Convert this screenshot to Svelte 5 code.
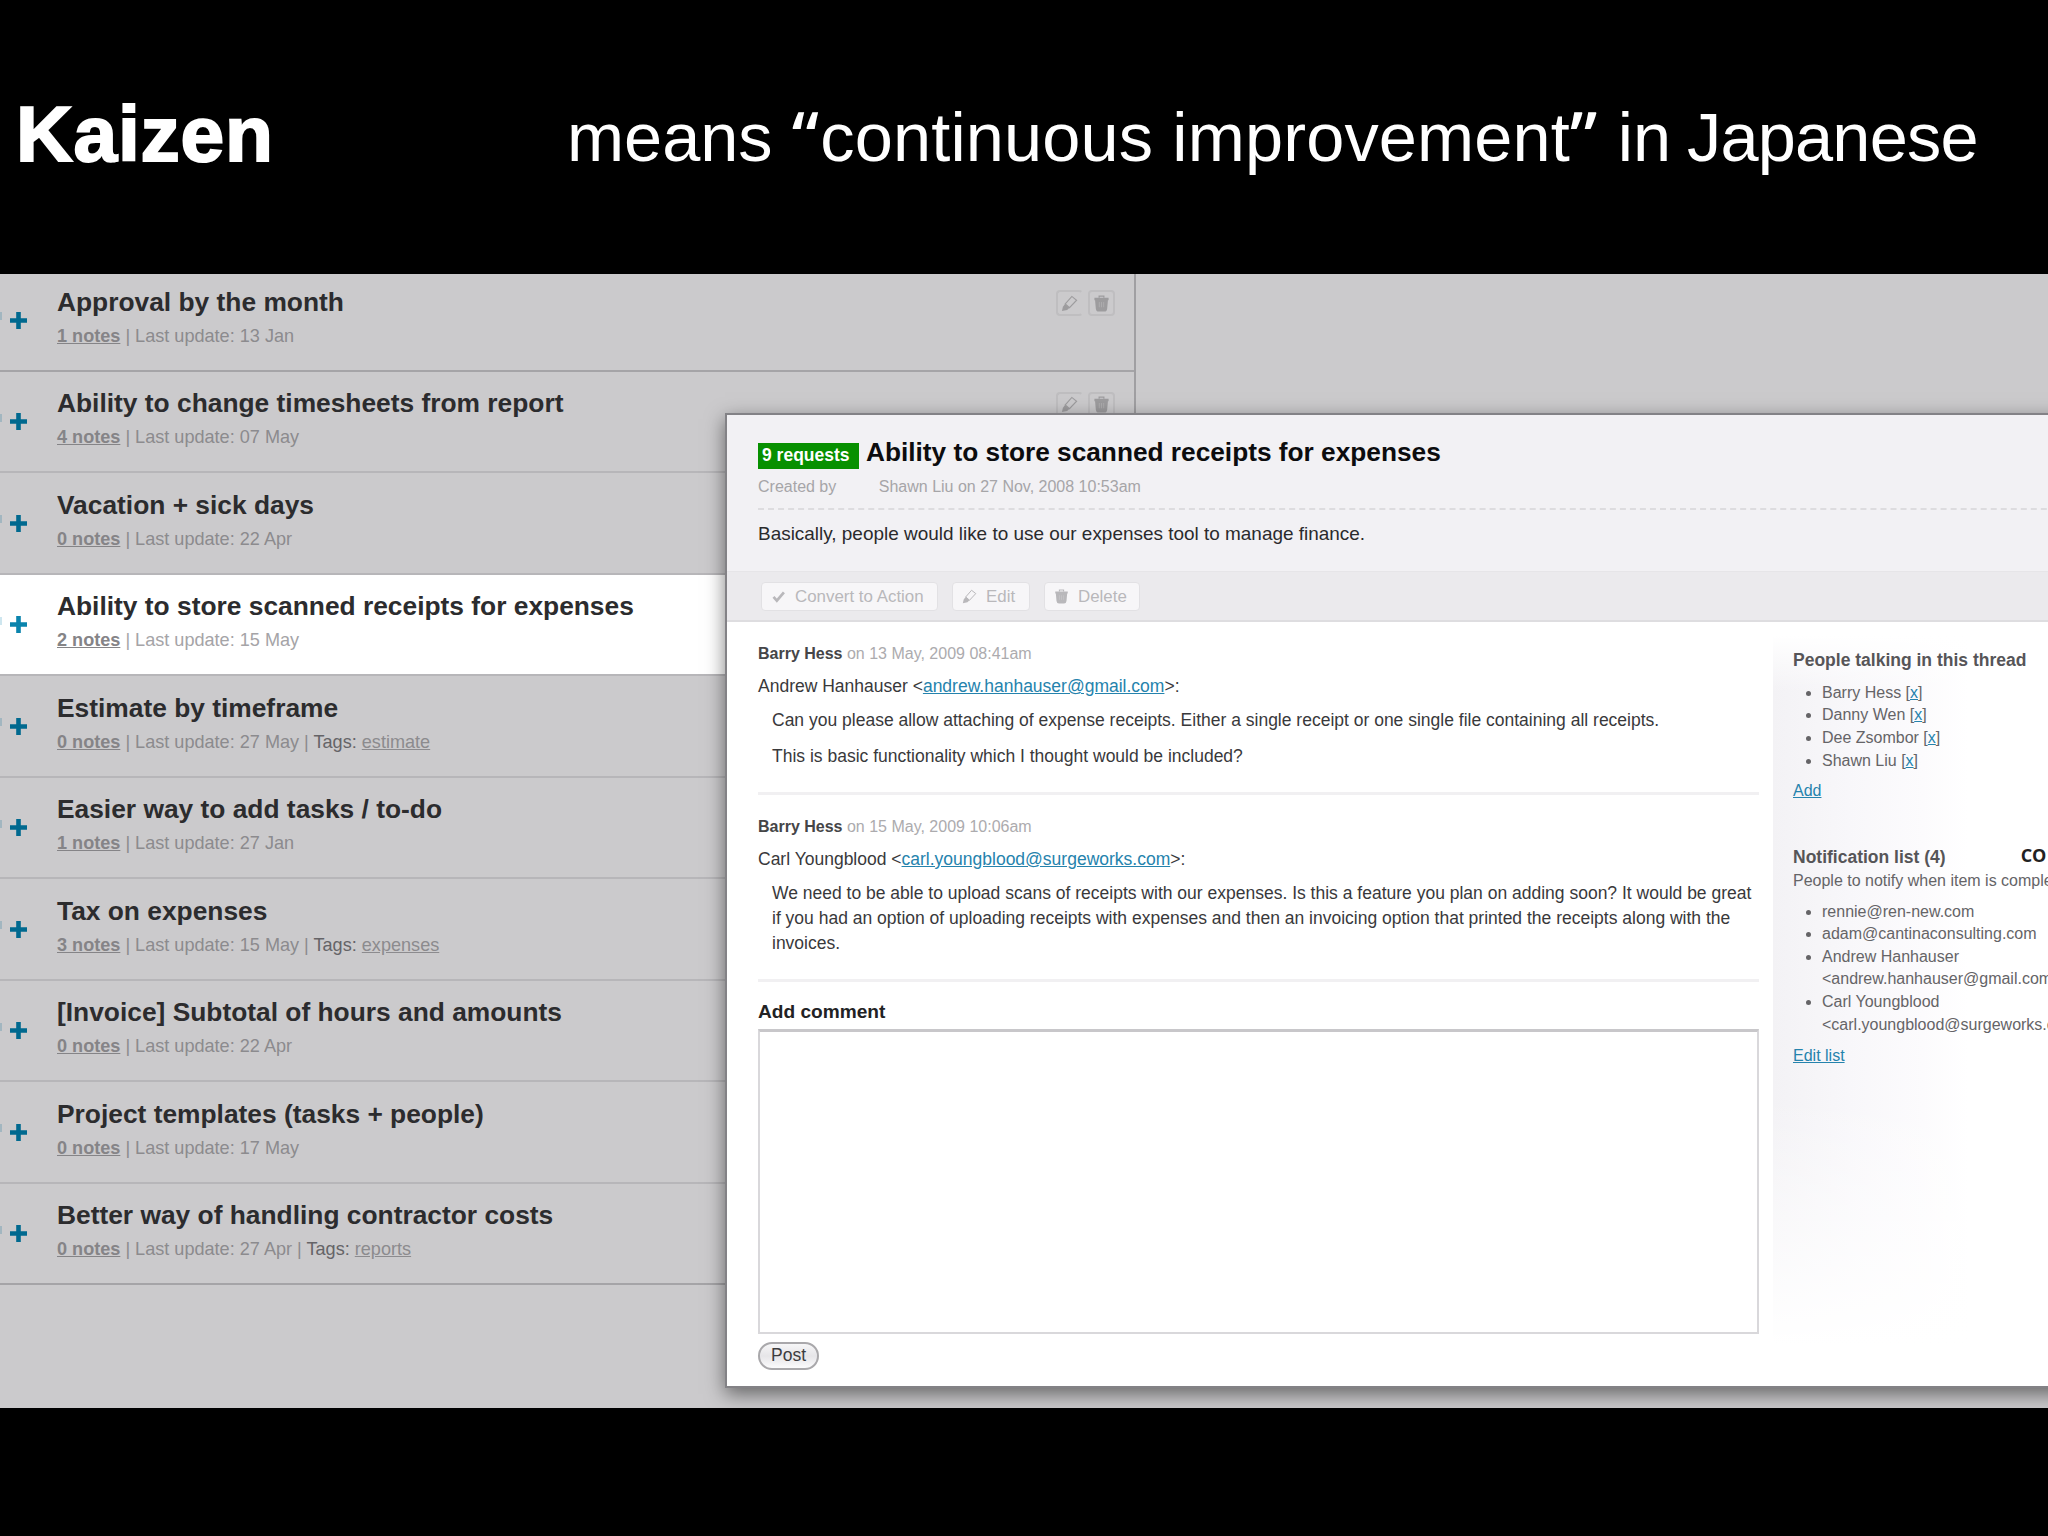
<script lang="ts">
  type Item = {
    title: string;
    notes: number;
    updated: string;
    tag?: string;
    active?: boolean;
  };

  const items: Item[] = [
    { title: 'Approval by the month', notes: 1, updated: '13 Jan' },
    { title: 'Ability to change timesheets from report', notes: 4, updated: '07 May' },
    { title: 'Vacation + sick days', notes: 0, updated: '22 Apr' },
    { title: 'Ability to store scanned receipts for expenses', notes: 2, updated: '15 May', active: true },
    { title: 'Estimate by timeframe', notes: 0, updated: '27 May', tag: 'estimate' },
    { title: 'Easier way to add tasks / to-do', notes: 1, updated: '27 Jan' },
    { title: 'Tax on expenses', notes: 3, updated: '15 May', tag: 'expenses' },
    { title: '[Invoice] Subtotal of hours and amounts', notes: 0, updated: '22 Apr' },
    { title: 'Project templates (tasks + people)', notes: 0, updated: '17 May' },
    { title: 'Better way of handling contractor costs', notes: 0, updated: '27 Apr', tag: 'reports' }
  ];

  const comments = [
    {
      author: 'Barry Hess',
      date: '13 May, 2009 08:41am',
      from: 'Andrew Hanhauser',
      email: 'andrew.hanhauser@gmail.com',
      lines: [
        'Can you please allow attaching of expense receipts. Either a single receipt or one single file containing all receipts.',
        'This is basic functionality which I thought would be included?'
      ]
    },
    {
      author: 'Barry Hess',
      date: '15 May, 2009 10:06am',
      from: 'Carl Youngblood',
      email: 'carl.youngblood@surgeworks.com',
      lines: [
        'We need to be able to upload scans of receipts with our expenses. Is this a feature you plan on adding soon? It would be great if you had an option of uploading receipts with expenses and then an invoicing option that printed the receipts along with the invoices.'
      ]
    }
  ];

  const people = ['Barry Hess', 'Danny Wen', 'Dee Zsombor', 'Shawn Liu'];

  const notified = [
    { name: 'rennie@ren-new.com' },
    { name: 'adam@cantinaconsulting.com' },
    { name: 'Andrew Hanhauser', email: '<andrew.hanhauser@gmail.com>' },
    { name: 'Carl Youngblood', email: '<carl.youngblood@surgeworks.com>' }
  ];
</script>

{#snippet pencil()}
  <svg class="icon" viewBox="0 0 18 18">
    <path d="M4.5 9.5 L11.5 1.5 L16.5 5.5 L9 13.5 Z" fill="none" stroke="currentColor" stroke-width="1.2" />
    <path d="M4.3 9.5 L9 13.6 L6.5 16 L1 17 L2 12.5 Z" fill="currentColor" />
  </svg>
{/snippet}

{#snippet trash()}
  <svg class="icon" viewBox="0 0 18 18">
    <path d="M6.5 3 V1.2 H11.5 V3" fill="none" stroke="currentColor" stroke-width="1.3" />
    <path d="M1.5 3 H16.5 V5.5 H15.8 L15 14.5 Q14.6 17.5 12 17.5 H6 Q3.4 17.5 3 14.5 L2.2 5.5 H1.5 Z" fill="currentColor" />
    <path d="M6.7 7.5 V13 M9 7.5 V13 M11.3 7.5 V13" stroke="#fff" stroke-opacity="0.2" stroke-width="0.9" />
  </svg>
{/snippet}

<div class="slide">
  <header>
    <h1>Kaizen</h1>
    <p>means <span class="quote">“</span><span class="quoted">continuous improvement</span><span class="quote">”</span> in <span class="language">Japanese</span></p>
  </header>

  <div class="stage">
    <div class="list">
      {#each items as item}
        <div class="row" class:active={item.active}>
          <span class="edge"></span>
          <svg class="plus" viewBox="0 0 17 17">
            <path d="M8.5 0 V17 M0 8.5 H17" stroke="currentColor" stroke-width="4.6" />
          </svg>
          <div class="info">
            <h2>{item.title}</h2>
            <div class="meta">
              <b>{item.notes} notes</b> | Last update: {item.updated}{#if item.tag}{' '}| <span class="tags">Tags:</span> <u>{item.tag}</u>{/if}
            </div>
          </div>
          <div class="tools">
            <span class="tool open">{@render pencil()}</span>
            <span class="tool">{@render trash()}</span>
          </div>
        </div>
      {/each}
    </div>

    <div class="dialog">
      <div class="head">
        <div class="heading">
          <span class="badge">9 requests</span>
          <h3>Ability to store scanned receipts for expenses</h3>
        </div>
        <div class="created"><span>Created by</span><span>Shawn Liu on 27 Nov, 2008 10:53am</span></div>
        <p class="summary">Basically, people would like to use our expenses tool to manage finance.</p>
      </div>

      <div class="toolbar">
        <span class="btn convert">
          <svg class="icon" viewBox="0 0 18 18">
            <path d="M3 9.5 L7 14 L15.5 4" fill="none" stroke="currentColor" stroke-width="3.2" />
          </svg>
          Convert to Action
        </span>
        <span class="btn edit">{@render pencil()} Edit</span>
        <span class="btn delete">{@render trash()} Delete</span>
      </div>

      <div class="body">
        <div class="thread">
          {#each comments as comment}
            <div class="comment">
              <div class="by"><b>{comment.author}</b> on {comment.date}</div>
              <div class="from">{comment.from} &lt;<span class="link">{comment.email}</span>&gt;:</div>
              {#each comment.lines as line}
                <p>{line}</p>
              {/each}
            </div>
          {/each}
          <div class="label">Add comment</div>
          <div class="textarea"></div>
          <div class="post">Post</div>
        </div>

        <div class="side">
          <h4>People talking in this thread</h4>
          <ul>
            {#each people as person}
              <li>{person} [<span class="link">x</span>]</li>
            {/each}
          </ul>
          <div class="action"><span class="link">Add</span></div>
          <h4 class="second">Notification list (4) <span class="callout">CO</span></h4>
          <div class="hint">People to notify when item is completed</div>
          <ul>
            {#each notified as person}
              <li>{person.name}{#if person.email}<br />{person.email}{/if}</li>
            {/each}
          </ul>
          <div class="action last"><span class="link">Edit list</span></div>
        </div>
      </div>
    </div>
  </div>
</div>

<style>
  :global(body) {
    background: #000;
    overflow: hidden;
  }

  .slide {
    width: 2048px;
    height: 1536px;
    overflow: hidden;
    background: #000;
    font-family: "Liberation Sans", Arial, sans-serif;
  }

  h1, h2, h3, h4, p, ul {
    margin: 0;
    padding: 0;
  }

  header {
    display: flex;
    align-items: baseline;
    box-sizing: border-box;
    height: 274px;
    padding: 79px 0 0 16px;
    color: #fff;
    white-space: nowrap;
  }

  h1 {
    width: 551px;
    font-size: 78.5px;
    font-weight: 700;
    letter-spacing: 0.8px;
    line-height: 110px;
    -webkit-text-stroke: 2px #fff;
  }

  header p {
    font-size: 68.5px;
    line-height: 110px;
  }

  .quote {
    margin-right: 1.5px;
    font-family: "Open Sans", sans-serif;
    font-weight: 600;
    line-height: 1;
  }

  .quoted {
    letter-spacing: 0.15px;
  }

  .language {
    margin-left: -3px;
    letter-spacing: -0.8px;
  }

  .stage {
    position: relative;
    height: 1134px;
    overflow: hidden;
    background: #cbcacc;
  }

  .list {
    width: 1134px;
    margin-top: -3.8px;
    border-right: 2px solid #a09fa2;
  }

  .row {
    display: flex;
    box-sizing: border-box;
    height: 101.5px;
    border-bottom: 2px solid #b7b6b9;
    color: #00698f;
  }

  .row:first-child,
  .row:last-child {
    border-bottom-color: #a5a4a7;
  }

  .row.active {
    background: #fff;
    color: #0a84ad;
  }

  .edge {
    width: 1.5px;
    height: 8px;
    margin: 42px 8px 0 0;
    background: currentColor;
    opacity: 0.2;
  }

  .plus {
    width: 17px;
    height: 17px;
    margin-top: 41.5px;
  }

  .info {
    flex: 1;
    padding: 16.6px 0 0 30.5px;
  }

  h2 {
    color: #2c2c2e;
    font-size: 26.35px;
    line-height: 30px;
    white-space: nowrap;
  }

  .meta {
    margin-top: 6.8px;
    color: #8c8b8e;
    font-size: 18.1px;
    line-height: 24px;
  }

  .meta b {
    color: #858487;
    text-decoration: underline;
  }

  .tags {
    color: #656467;
  }

  .active .meta {
    color: #a5a4a7;
  }

  .tools {
    display: flex;
    gap: 5px;
    padding: 20px 19px 0 0;
  }

  .tool {
    display: flex;
    align-items: center;
    justify-content: center;
    box-sizing: border-box;
    width: 27px;
    height: 26px;
    border: 2px solid #bfbec0;
    border-radius: 4px;
    color: #9d9c9e;
  }

  .tool.open {
    border-right-color: transparent;
  }

  .icon {
    width: 17px;
    height: 17px;
  }

  .dialog {
    position: absolute;
    top: 139px;
    left: 725px;
    width: 1400px;
    height: 971px;
    border: 2px solid #838286;
    background: #fff;
    box-shadow: 0 6px 18px rgba(0, 0, 0, 0.5);
  }

  .head {
    box-sizing: border-box;
    height: 156px;
    padding: 21.6px 0 0 31px;
    background: #f2f1f4;
  }

  .heading {
    display: flex;
    align-items: flex-start;
  }

  .badge {
    box-sizing: border-box;
    width: 101px;
    height: 26.5px;
    margin: 6.4px 7px 0 0;
    padding-left: 4px;
    background: #079000;
    color: #fff;
    font-size: 17.5px;
    font-weight: bold;
    line-height: 25px;
  }

  h3 {
    color: #0c0c0e;
    font-size: 26.25px;
    line-height: 30px;
  }

  .created {
    display: flex;
    gap: 42.5px;
    margin-top: 7.2px;
    padding-bottom: 11px;
    border-bottom: 2px dashed #dddcdf;
    color: #a6a5a8;
    font-size: 16px;
    line-height: 20px;
  }

  .summary {
    margin-top: 12.2px;
    color: #2a2a2c;
    font-size: 18.95px;
    line-height: 24px;
  }

  .toolbar {
    display: flex;
    box-sizing: border-box;
    height: 51px;
    padding: 10px 0 0 34px;
    gap: 14px;
    border-top: 1px solid #e6e5e8;
    border-bottom: 2px solid #dedde0;
    background: #ebeaed;
  }

  .btn {
    display: flex;
    align-items: center;
    gap: 9px;
    box-sizing: border-box;
    height: 29px;
    padding-left: 9px;
    border: 1.5px solid #e2e1e4;
    border-radius: 4px;
    background: #f7f6f8;
    color: #b9b8bb;
    font-size: 16.9px;
    white-space: nowrap;
  }

  .btn .icon {
    width: 15px;
    height: 15px;
  }

  .convert {
    width: 177px;
  }

  .edit {
    width: 78px;
  }

  .delete {
    width: 96px;
  }

  .body {
    display: flex;
  }

  .thread {
    width: 1001px;
    padding: 0 14px 0 31px;
  }

  .comment {
    padding: 22.4px 0 23px;
    border-bottom: 3px solid #f1f0f2;
    color: #39393b;
    font-size: 17.5px;
  }

  .by {
    color: #acabae;
    font-size: 16px;
    line-height: 20px;
  }

  .by b {
    color: #454547;
  }

  .from {
    margin-top: 9.7px;
    line-height: 24px;
  }

  .comment p {
    margin: 10.4px 0 0 14px;
    line-height: 25px;
  }

  .link {
    color: #2583ad;
    text-decoration: underline;
  }

  .label {
    margin-top: 18px;
    color: #222224;
    font-size: 19.1px;
    font-weight: bold;
    line-height: 24px;
  }

  .textarea {
    box-sizing: border-box;
    height: 304.5px;
    margin-top: 5px;
    border: 2px solid #d9d8db;
    border-top: 3px solid #c8c7ca;
  }

  .post {
    box-sizing: border-box;
    width: 61px;
    height: 28px;
    margin-top: 8px;
    border: 2px solid #a9a8ab;
    border-radius: 14px;
    background: linear-gradient(#f6f6f7, #e6e5e8 50%, #fbfbfc);
    color: #3c3c3e;
    font-size: 17.5px;
    line-height: 22px;
    text-align: center;
  }

  .side {
    flex: 1;
    box-sizing: border-box;
    height: 709px;
    margin-top: 14px;
    padding: 12px 0 0 20px;
    background:
      linear-gradient(to bottom, #fff, rgba(255, 255, 255, 0) 8%, rgba(255, 255, 255, 0) 65%, #fff),
      linear-gradient(to right, #f3f2f5 0, #f8f7fa 75px, #fcfbfd 150px, #fff 195px);
    color: #656467;
    font-size: 16px;
    white-space: nowrap;
  }

  h4 {
    color: #565558;
    font-size: 17.5px;
    line-height: 24px;
  }

  h4.second {
    display: flex;
    margin-top: 44px;
  }

  .callout {
    margin-left: 75px;
    color: #222;
    font-family: "Open Sans", sans-serif;
    font-size: 18px;
    line-height: 21px;
  }

  ul {
    margin-top: 9.8px;
    padding-left: 29px;
  }

  li {
    line-height: 22.65px;
  }

  .hint {
    margin-top: 1.5px;
    line-height: 20px;
  }

  .action {
    margin-top: 8.8px;
    line-height: 20px;
  }

  .action.last {
    margin-top: 9.8px;
  }
</style>
